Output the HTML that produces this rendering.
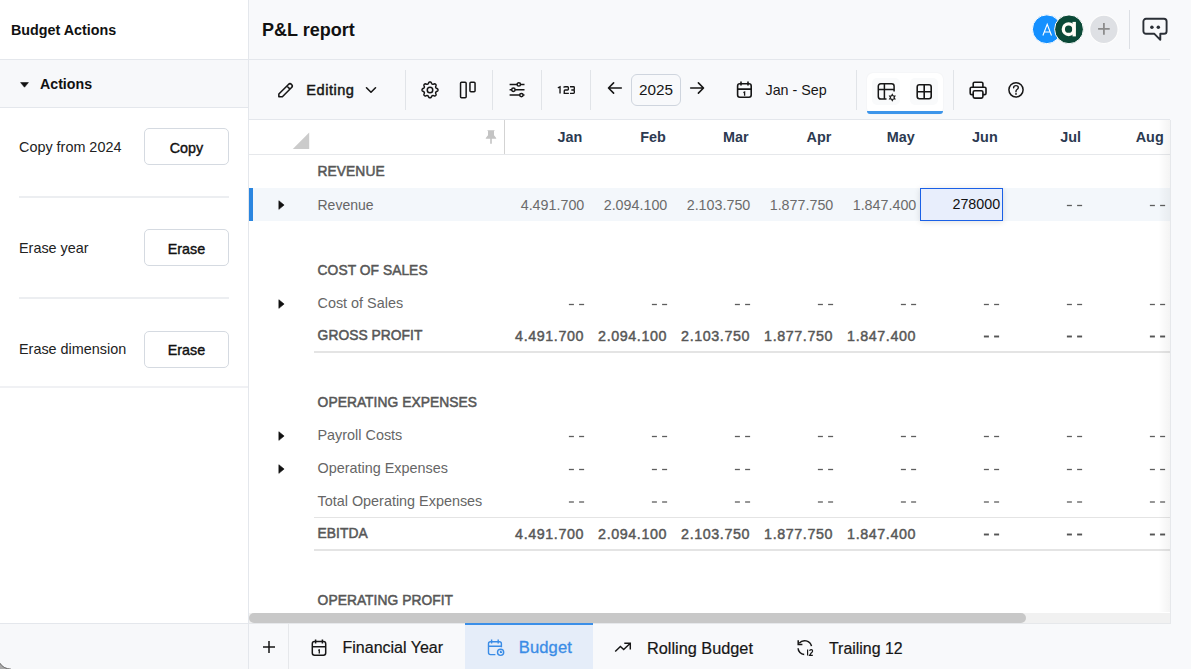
<!DOCTYPE html>
<html><head><meta charset="utf-8">
<style>
*{box-sizing:border-box;margin:0;padding:0}
html,body{width:1191px;height:670px;overflow:hidden;background:#f8f9fb;font-family:"Liberation Sans",sans-serif;color:#1c1c1e;position:relative}
.a{position:absolute}
.t{position:absolute;white-space:nowrap;line-height:1}
.hl{position:absolute;height:1px;background:#e4e7ec}
.vl{position:absolute;width:1px;background:#e4e7ec}
.btn{position:absolute;border:1px solid #d5dae1;border-radius:5px;background:#fff}
.sep{position:absolute;width:1px;background:#e1e4e8;top:70px;height:40px}
svg{position:absolute;overflow:visible}
</style></head><body>

<div class="a" style="left:0;top:0;width:248px;height:670px;background:#fff"></div>
<div class="t" style="left:11px;top:22.70px;font-size:14.3px;font-weight:700;color:#111">Budget Actions</div>
<div class="a" style="left:0;top:60px;width:248px;height:48px;background:#f7f8fa"></div>
<div class="hl" style="left:0;top:59px;width:248px"></div>
<div class="hl" style="left:0;top:107px;width:248px"></div>
<svg style="left:20px;top:82px" width="9" height="6"><path d="M0.6 0.6 L8.4 0.6 L4.5 5.2 Z" fill="#111" stroke="#111" stroke-width="0.6" stroke-linejoin="round"/></svg>
<div class="t" style="left:40px;top:76.68px;font-size:14.2px;font-weight:700;color:#111">Actions</div>
<div class="t" style="left:19px;top:140.01px;font-size:14.4px;color:#222">Copy from 2024</div>
<div class="btn" style="left:144px;top:128px;width:85px;height:37px"></div>
<div class="t" style="left:144px;width:85px;text-align:center;top:140.52px;font-size:14.3px;-webkit-text-stroke:0.4px #111;color:#111">Copy</div>
<div class="t" style="left:19px;top:241.01px;font-size:14.4px;color:#222">Erase year</div>
<div class="btn" style="left:144px;top:229px;width:85px;height:37px"></div>
<div class="t" style="left:144px;width:85px;text-align:center;top:241.52px;font-size:14.3px;-webkit-text-stroke:0.4px #111;color:#111">Erase</div>
<div class="t" style="left:19px;top:342.01px;font-size:14.4px;color:#222">Erase dimension</div>
<div class="btn" style="left:144px;top:331px;width:85px;height:37px"></div>
<div class="t" style="left:144px;width:85px;text-align:center;top:342.52px;font-size:14.3px;-webkit-text-stroke:0.4px #111;color:#111">Erase</div>
<div class="a" style="left:19px;top:196px;width:210px;height:2px;background:#eceef1"></div>
<div class="a" style="left:19px;top:297px;width:210px;height:2px;background:#eceef1"></div>
<div class="a" style="left:0;top:386px;width:248px;height:2px;background:#f0f1f4"></div>
<div class="a" style="left:0;top:624px;width:248px;height:46px;background:#f7f8fa"></div>
<div class="hl" style="left:0;top:623px;width:248px"></div>
<div class="vl" style="left:248px;top:0;height:670px"></div>
<div class="t" style="left:262px;top:20.96px;font-size:18px;font-weight:700;color:#111">P&amp;L report</div>
<div class="hl" style="left:249px;top:59px;width:921px"></div>
<div class="hl" style="left:249px;top:119px;width:921px"></div>
<svg style="left:1030px;top:13px" width="92" height="33"><circle cx="16.8" cy="16.25" r="14.4" fill="#1490ff" stroke="#fff" stroke-width="1"/><path d="M12.9 22.5L17.2 11.2L21.5 22.5M14.2 19.0H20.2" fill="none" stroke="#fff" stroke-width="1.1"/><circle cx="39" cy="16.3" r="14.4" fill="#0b4937" stroke="#fff" stroke-width="1"/><circle cx="38.6" cy="16.2" r="5.3" fill="none" stroke="#fffdf6" stroke-width="3.3"/><rect x="42.5" y="8.9" width="3.4" height="14.5" fill="#fffdf6"/><circle cx="73.9" cy="16.4" r="14.2" fill="#dee0e4" stroke="#fdfdfd" stroke-width="1.2"/><path d="M73.9 10.1V21.7M68.1 15.9H79.7" stroke="#8c8c8c" stroke-width="1.8"/></svg>
<div class="a" style="left:1129px;top:10px;width:1px;height:39px;background:#dcdfe4"></div>
<svg style="left:1142px;top:17px" width="26" height="25" viewBox="0 0 26 25"><path d="M4 1.8H22A2.6 2.6 0 0 1 24.6 4.4V14.2A2.6 2.6 0 0 1 22 16.8H18.3V22.8L12.4 16.8H4A2.6 2.6 0 0 1 1.4 14.2V4.4A2.6 2.6 0 0 1 4 1.8Z" fill="none" stroke="#2a2f36" stroke-width="1.9" stroke-linejoin="round"/><circle cx="9.9" cy="10.3" r="1.75" fill="#2a2f36"/><circle cx="16.3" cy="10.3" r="1.75" fill="#2a2f36"/></svg>
<svg style="left:272px;top:78px" width="30" height="24"><path d="M6.85 16.03 L16.44 6.44 A2.2 2.2 0 0 1 19.56 9.56 L10.37 18.75 L6.85 18.75 Z M14.88 8.0 L18.0 11.12" fill="none" stroke="#161616" stroke-width="1.55" stroke-linejoin="round"/></svg>
<div class="t" style="left:306.3px;top:82.54px;font-size:14.6px;color:#161616;letter-spacing:0.5px;-webkit-text-stroke:0.45px #161616">Editing</div>
<svg style="left:365px;top:86px" width="12" height="8"><path d="M1.5 1.8L6 6.2L10.5 1.8" fill="none" stroke="#161616" stroke-width="1.6" stroke-linecap="round" stroke-linejoin="round"/></svg>
<div class="sep" style="left:405px"></div>
<div class="sep" style="left:492px"></div>
<div class="sep" style="left:541px"></div>
<div class="sep" style="left:590px"></div>
<div class="sep" style="left:856px"></div>
<div class="sep" style="left:953px"></div>
<svg style="left:420px;top:80px" width="20" height="20"><path d="M10.00 1.95 L10.31 1.97 L10.62 2.05 L10.91 2.22 L11.17 2.52 L11.39 2.94 L11.57 3.36 L11.75 3.68 L11.96 3.88 L12.17 4.02 L12.39 4.13 L12.62 4.21 L12.87 4.26 L13.16 4.26 L13.51 4.17 L13.94 4.00 L14.39 3.85 L14.79 3.83 L15.11 3.91 L15.38 4.07 L15.62 4.28 L15.83 4.52 L15.99 4.79 L16.07 5.11 L16.05 5.51 L15.90 5.96 L15.73 6.39 L15.64 6.74 L15.64 7.03 L15.69 7.28 L15.77 7.51 L15.88 7.73 L16.02 7.94 L16.22 8.15 L16.54 8.33 L16.96 8.51 L17.38 8.73 L17.68 8.99 L17.85 9.28 L17.93 9.59 L17.95 9.90 L17.93 10.21 L17.85 10.52 L17.68 10.81 L17.38 11.07 L16.96 11.29 L16.54 11.47 L16.22 11.65 L16.02 11.86 L15.88 12.07 L15.77 12.29 L15.69 12.52 L15.64 12.77 L15.64 13.06 L15.73 13.41 L15.90 13.84 L16.05 14.29 L16.07 14.69 L15.99 15.01 L15.83 15.28 L15.62 15.52 L15.38 15.73 L15.11 15.89 L14.79 15.97 L14.39 15.95 L13.94 15.80 L13.51 15.63 L13.16 15.54 L12.87 15.54 L12.62 15.59 L12.39 15.67 L12.17 15.78 L11.96 15.92 L11.75 16.12 L11.57 16.44 L11.39 16.86 L11.17 17.28 L10.91 17.58 L10.62 17.75 L10.31 17.83 L10.00 17.85 L9.69 17.83 L9.38 17.75 L9.09 17.58 L8.83 17.28 L8.61 16.86 L8.43 16.44 L8.25 16.12 L8.04 15.92 L7.83 15.78 L7.61 15.67 L7.38 15.59 L7.13 15.54 L6.84 15.54 L6.49 15.63 L6.06 15.80 L5.61 15.95 L5.21 15.97 L4.89 15.89 L4.62 15.73 L4.38 15.52 L4.17 15.28 L4.01 15.01 L3.93 14.69 L3.95 14.29 L4.10 13.84 L4.27 13.41 L4.36 13.06 L4.36 12.77 L4.31 12.52 L4.23 12.29 L4.12 12.07 L3.98 11.86 L3.78 11.65 L3.46 11.47 L3.04 11.29 L2.62 11.07 L2.32 10.81 L2.15 10.52 L2.07 10.21 L2.05 9.90 L2.07 9.59 L2.15 9.28 L2.32 8.99 L2.62 8.73 L3.04 8.51 L3.46 8.33 L3.78 8.15 L3.98 7.94 L4.12 7.73 L4.23 7.51 L4.31 7.28 L4.36 7.03 L4.36 6.74 L4.27 6.39 L4.10 5.96 L3.95 5.51 L3.93 5.11 L4.01 4.79 L4.17 4.52 L4.38 4.28 L4.62 4.07 L4.89 3.91 L5.21 3.83 L5.61 3.85 L6.06 4.00 L6.49 4.17 L6.84 4.26 L7.13 4.26 L7.38 4.21 L7.61 4.13 L7.83 4.02 L8.04 3.88 L8.25 3.68 L8.43 3.36 L8.61 2.94 L8.83 2.52 L9.09 2.22 L9.38 2.05 L9.69 1.97 L10.00 1.95Z" fill="none" stroke="#161616" stroke-width="1.5" stroke-linejoin="round"/><circle cx="10" cy="9.9" r="2.75" fill="none" stroke="#161616" stroke-width="1.5"/></svg>
<svg style="left:458px;top:80px" width="20" height="20"><rect x="2.55" y="2.25" width="5.6" height="15.4" rx="1.0" fill="none" stroke="#161616" stroke-width="1.5"/><rect x="11.95" y="2.25" width="5.1" height="9.6" rx="1.0" fill="none" stroke="#161616" stroke-width="1.5"/></svg>
<svg style="left:508px;top:80px" width="20" height="20"><g stroke="#161616" stroke-width="1.5" fill="none"><path d="M1.6 4.4H9.1M12.5 4.4H16.5M1.6 9.8H3.7M7.1 9.8H16.5M1.6 15.1H11.7M15.1 15.1H16.5"/><circle cx="10.8" cy="4.4" r="1.7"/><circle cx="5.4" cy="9.8" r="1.7"/><circle cx="13.4" cy="15.1" r="1.7"/></g></svg>
<svg style="left:556px;top:84px" width="22" height="12"><g stroke="#161616" stroke-width="1.45" fill="none" stroke-linejoin="miter" transform="translate(0.45,0.55) scale(0.94,0.92)"><path d="M1.5 3.6L3.8 2.4V9.6"/><path d="M7.6 3.2Q8 2.4 9.4 2.4H11.8Q12.7 2.4 12.7 3.5V5.1Q12.7 5.9 11.8 5.9H9.1Q8.3 5.9 8.3 6.9V9.6H13.2"/><path d="M14.4 2.4H18.2Q19 2.4 19 3.3V5.1Q19 5.9 18.2 5.9H15.8M18.2 5.9Q19 5.9 19 6.8V8.7Q19 9.6 18.2 9.6H14.4"/></g></svg>
<svg style="left:606px;top:80px" width="18" height="16"><path d="M15.3 8H2.6M7.6 2.9L2.5 8L7.6 13.1" fill="none" stroke="#161616" stroke-width="1.6" stroke-linecap="round" stroke-linejoin="round"/></svg>
<svg style="left:688px;top:80px" width="18" height="16"><path d="M2.7 8H15.4M10.4 2.9L15.5 8L10.4 13.1" fill="none" stroke="#161616" stroke-width="1.6" stroke-linecap="round" stroke-linejoin="round"/></svg>
<div class="a" style="left:631px;top:74px;width:50px;height:32px;border:1px solid #cfd5de;border-radius:6px;background:#f8f9fb"></div>
<div class="t" style="left:631px;top:82.05px;font-size:15.3px;color:#161616;width:50px;text-align:center">2025</div>
<svg style="left:735px;top:80px" width="20" height="20"><g fill="none" stroke="#161616" stroke-width="1.6"><rect x="2.6" y="3.7" width="13.6" height="13.6" rx="2.2"/><path d="M2.6 9.1H16.2M6 1.4V5.6M13 1.4V5.6"/></g><path d="M8.4 12.6L9.6 12.0V15.8" fill="none" stroke="#161616" stroke-width="1.3"/></svg>
<div class="t" style="left:765.5px;top:82.90px;font-size:14.3px;color:#161616">Jan - Sep</div>
<div class="a" style="left:867px;top:73px;width:76px;height:41px;background:#fff;border-radius:6px;box-shadow:0 0 2px rgba(0,0,0,0.06)"></div>
<div class="a" style="left:867px;top:110.5px;width:76px;height:3px;background:#3d95ea;border-radius:0 0 3px 3px"></div>
<div class="a" style="left:872px;top:78px;width:28px;height:27px;background:#f9fafb;border-radius:5px"></div>
<div class="a" style="left:910px;top:78px;width:28px;height:27px;background:#f9fafb;border-radius:5px"></div>
<svg style="left:876px;top:82px" width="22" height="22"><g fill="none" stroke="#161616" stroke-width="1.5"><path d="M10.5 17.0H4.8Q2.3 17.0 2.3 14.5V4.3Q2.3 1.8 4.8 1.8H15.6Q18.1 1.8 18.1 4.3V9.6"/><path d="M2.3 7.5H18.1M8.4 1.8V17.0"/></g><path d="M16.30 12.50 L17.18 13.98 L18.90 14.00 L18.05 15.50 L18.90 17.00 L17.18 17.02 L16.30 18.50 L15.43 17.02 L13.70 17.00 L14.55 15.50 L13.70 14.00 L15.43 13.98Z" fill="#fff" stroke="#161616" stroke-width="1.2" stroke-linejoin="miter"/></svg>
<svg style="left:915px;top:82px" width="18" height="18"><g fill="none" stroke="#161616" stroke-width="1.6"><rect x="2.2" y="2.7" width="14" height="14" rx="2.2"/><path d="M2.2 9.7H16.2M9.2 2.7V16.7"/></g></svg>
<svg style="left:968px;top:80px" width="20" height="20"><g fill="none" stroke="#161616" stroke-width="1.6" stroke-linejoin="round"><path d="M5.2 14.6H3.6Q2.2 14.6 2.2 13.2V8.6Q2.2 7.2 3.6 7.2H16.6Q18 7.2 18 8.6V13.2Q18 14.6 16.6 14.6H14.9"/><path d="M5.2 7.2V3.6Q5.2 2.2 6.6 2.2H13.5Q14.9 2.2 14.9 3.6V7.2"/><rect x="5.2" y="10.8" width="9.7" height="7.3" rx="1.5"/></g></svg>
<svg style="left:1006px;top:80px" width="20" height="20"><circle cx="10" cy="9.85" r="7.1" fill="none" stroke="#161616" stroke-width="1.5"/><path d="M7.6 7.7Q7.7 5.6 10 5.6Q12.3 5.6 12.3 7.6Q12.3 8.8 11 9.5Q10 10.1 10 11.3V11.7" fill="none" stroke="#161616" stroke-width="1.4" stroke-linecap="round"/><circle cx="10" cy="13.9" r="0.9" fill="#161616"/></svg>
<div class="a" style="left:249px;top:120px;width:921px;height:493px;background:#fff"></div>
<div class="a" style="left:1170px;top:60px;width:21px;height:563px;background:#f8f9fb"></div>
<div class="hl" style="left:249px;top:154px;width:921px;background:#e6e8eb"></div>
<div class="a" style="left:504px;top:120px;width:1px;height:34px;background:#d3d3d3"></div>
<svg style="left:292px;top:132px" width="18" height="18"><path d="M17.2 0.6V17H0.8Z" fill="#cbcbcb"/></svg>
<svg style="left:484px;top:129px" width="14" height="16"><path d="M3.2 1.2H10.8L10 2.2V6.2L12.2 8.9V9.7H1.8V8.9L4 6.2V2.2Z M6.2 9.7H7.8V14.8H6.2Z" fill="#c4c4c4"/></svg>
<div class="t" style="left:382.29999999999995px;width:200px;text-align:right;top:129.71px;font-size:14.4px;font-weight:700;color:#2c3a51">Jan</div>
<div class="t" style="left:465.9px;width:200px;text-align:right;top:129.71px;font-size:14.4px;font-weight:700;color:#2c3a51">Feb</div>
<div class="t" style="left:548.5px;width:200px;text-align:right;top:129.71px;font-size:14.4px;font-weight:700;color:#2c3a51">Mar</div>
<div class="t" style="left:631.4px;width:200px;text-align:right;top:129.71px;font-size:14.4px;font-weight:700;color:#2c3a51">Apr</div>
<div class="t" style="left:714.7px;width:200px;text-align:right;top:129.71px;font-size:14.4px;font-weight:700;color:#2c3a51">May</div>
<div class="t" style="left:797.7px;width:200px;text-align:right;top:129.71px;font-size:14.4px;font-weight:700;color:#2c3a51">Jun</div>
<div class="t" style="left:881px;width:200px;text-align:right;top:129.71px;font-size:14.4px;font-weight:700;color:#2c3a51">Jul</div>
<div class="t" style="left:963.7px;width:200px;text-align:right;top:129.71px;font-size:14.4px;font-weight:700;color:#2c3a51">Aug</div>
<div class="a" style="left:249px;top:188px;width:921px;height:33px;background:#f3f7fb"></div>
<div class="a" style="left:249px;top:188px;width:4px;height:33px;background:#2a86e0"></div>
<div class="t" style="left:317.6px;top:165.22px;font-size:13.8px;color:#575757;letter-spacing:0.05px;-webkit-text-stroke:0.5px #575757">REVENUE</div>
<svg style="left:277px;top:199.5px" width="9" height="11"><path d="M1.85 0.75L7.1 5.05L1.85 9.35Z" fill="#111" stroke="#111" stroke-width="0.6" stroke-linejoin="round"/></svg>
<div class="t" style="left:317.5px;top:197.95px;font-size:14.0px;color:#666666">Revenue</div>
<div class="t" style="left:384.29999999999995px;width:200px;text-align:right;top:197.70px;font-size:14.3px;color:#6b6b6b">4.491.700</div>
<div class="t" style="left:467.29999999999995px;width:200px;text-align:right;top:197.70px;font-size:14.3px;color:#6b6b6b">2.094.100</div>
<div class="t" style="left:550.3px;width:200px;text-align:right;top:197.70px;font-size:14.3px;color:#6b6b6b">2.103.750</div>
<div class="t" style="left:633.3px;width:200px;text-align:right;top:197.70px;font-size:14.3px;color:#6b6b6b">1.877.750</div>
<div class="t" style="left:716.3px;width:200px;text-align:right;top:197.70px;font-size:14.3px;color:#6b6b6b">1.847.400</div>
<div class="a" style="left:920px;top:188px;width:83px;height:33px;background:#e8eefc;border:1px solid #1a60e6;box-shadow:0 1px 6px rgba(0,0,0,0.13)"></div>
<div class="t" style="left:800.2px;width:200px;text-align:right;top:196.90px;font-size:14.3px;color:#111">278000</div>
<svg style="left:1066px;top:202px" width="18" height="6"><rect x="0.90" y="2.85" width="5" height="1.3" fill="#5e5e5e"/><rect x="11.10" y="2.85" width="5" height="1.3" fill="#5e5e5e"/></svg>
<svg style="left:1149px;top:202px" width="18" height="6"><rect x="0.90" y="2.85" width="5" height="1.3" fill="#5e5e5e"/><rect x="11.10" y="2.85" width="5" height="1.3" fill="#5e5e5e"/></svg>
<div class="t" style="left:317.6px;top:263.72px;font-size:13.8px;color:#575757;letter-spacing:0.05px;-webkit-text-stroke:0.5px #575757">COST OF SALES</div>
<svg style="left:277px;top:298.5px" width="9" height="11"><path d="M1.85 0.75L7.1 5.05L1.85 9.35Z" fill="#111" stroke="#111" stroke-width="0.6" stroke-linejoin="round"/></svg>
<div class="t" style="left:317.5px;top:296.41px;font-size:14.4px;color:#666666">Cost of Sales</div>
<svg style="left:568px;top:301px" width="18" height="6"><rect x="0.90" y="2.85" width="5" height="1.3" fill="#5e5e5e"/><rect x="11.10" y="2.85" width="5" height="1.3" fill="#5e5e5e"/></svg>
<svg style="left:651px;top:301px" width="18" height="6"><rect x="0.90" y="2.85" width="5" height="1.3" fill="#5e5e5e"/><rect x="11.10" y="2.85" width="5" height="1.3" fill="#5e5e5e"/></svg>
<svg style="left:734px;top:301px" width="18" height="6"><rect x="0.90" y="2.85" width="5" height="1.3" fill="#5e5e5e"/><rect x="11.10" y="2.85" width="5" height="1.3" fill="#5e5e5e"/></svg>
<svg style="left:817px;top:301px" width="18" height="6"><rect x="0.90" y="2.85" width="5" height="1.3" fill="#5e5e5e"/><rect x="11.10" y="2.85" width="5" height="1.3" fill="#5e5e5e"/></svg>
<svg style="left:900px;top:301px" width="18" height="6"><rect x="0.90" y="2.85" width="5" height="1.3" fill="#5e5e5e"/><rect x="11.10" y="2.85" width="5" height="1.3" fill="#5e5e5e"/></svg>
<svg style="left:983px;top:301px" width="18" height="6"><rect x="0.90" y="2.85" width="5" height="1.3" fill="#5e5e5e"/><rect x="11.10" y="2.85" width="5" height="1.3" fill="#5e5e5e"/></svg>
<svg style="left:1066px;top:301px" width="18" height="6"><rect x="0.90" y="2.85" width="5" height="1.3" fill="#5e5e5e"/><rect x="11.10" y="2.85" width="5" height="1.3" fill="#5e5e5e"/></svg>
<svg style="left:1149px;top:301px" width="18" height="6"><rect x="0.90" y="2.85" width="5" height="1.3" fill="#5e5e5e"/><rect x="11.10" y="2.85" width="5" height="1.3" fill="#5e5e5e"/></svg>
<div class="t" style="left:317.6px;top:328.92px;font-size:13.8px;color:#575757;letter-spacing:0.05px;-webkit-text-stroke:0.5px #575757">GROSS PROFIT</div>
<div class="t" style="left:384.0999999999999px;width:200px;text-align:right;top:328.50px;font-size:14.3px;color:#575757;letter-spacing:0.6px;margin-right:-0.6px;-webkit-text-stroke:0.45px #575757">4.491.700</div>
<div class="t" style="left:467.0999999999999px;width:200px;text-align:right;top:328.50px;font-size:14.3px;color:#575757;letter-spacing:0.6px;margin-right:-0.6px;-webkit-text-stroke:0.45px #575757">2.094.100</div>
<div class="t" style="left:550.0999999999999px;width:200px;text-align:right;top:328.50px;font-size:14.3px;color:#575757;letter-spacing:0.6px;margin-right:-0.6px;-webkit-text-stroke:0.45px #575757">2.103.750</div>
<div class="t" style="left:633.0999999999999px;width:200px;text-align:right;top:328.50px;font-size:14.3px;color:#575757;letter-spacing:0.6px;margin-right:-0.6px;-webkit-text-stroke:0.45px #575757">1.877.750</div>
<div class="t" style="left:716.0999999999999px;width:200px;text-align:right;top:328.50px;font-size:14.3px;color:#575757;letter-spacing:0.6px;margin-right:-0.6px;-webkit-text-stroke:0.45px #575757">1.847.400</div>
<svg style="left:983px;top:333px" width="18" height="6"><rect x="0.90" y="2.55" width="5" height="1.9" fill="#555"/><rect x="11.10" y="2.55" width="5" height="1.9" fill="#555"/></svg>
<svg style="left:1066px;top:333px" width="18" height="6"><rect x="0.90" y="2.55" width="5" height="1.9" fill="#555"/><rect x="11.10" y="2.55" width="5" height="1.9" fill="#555"/></svg>
<svg style="left:1149px;top:333px" width="18" height="6"><rect x="0.90" y="2.55" width="5" height="1.9" fill="#555"/><rect x="11.10" y="2.55" width="5" height="1.9" fill="#555"/></svg>
<div class="a" style="left:314px;top:351px;width:856px;height:2px;background:#e4e4e4"></div>
<div class="t" style="left:317.6px;top:395.82px;font-size:13.8px;color:#575757;letter-spacing:0.05px;-webkit-text-stroke:0.5px #575757">OPERATING EXPENSES</div>
<svg style="left:277px;top:430.5px" width="9" height="11"><path d="M1.85 0.75L7.1 5.05L1.85 9.35Z" fill="#111" stroke="#111" stroke-width="0.6" stroke-linejoin="round"/></svg>
<div class="t" style="left:317.5px;top:428.31px;font-size:14.4px;color:#666666">Payroll Costs</div>
<svg style="left:568px;top:433px" width="18" height="6"><rect x="0.90" y="2.85" width="5" height="1.3" fill="#5e5e5e"/><rect x="11.10" y="2.85" width="5" height="1.3" fill="#5e5e5e"/></svg>
<svg style="left:651px;top:433px" width="18" height="6"><rect x="0.90" y="2.85" width="5" height="1.3" fill="#5e5e5e"/><rect x="11.10" y="2.85" width="5" height="1.3" fill="#5e5e5e"/></svg>
<svg style="left:734px;top:433px" width="18" height="6"><rect x="0.90" y="2.85" width="5" height="1.3" fill="#5e5e5e"/><rect x="11.10" y="2.85" width="5" height="1.3" fill="#5e5e5e"/></svg>
<svg style="left:817px;top:433px" width="18" height="6"><rect x="0.90" y="2.85" width="5" height="1.3" fill="#5e5e5e"/><rect x="11.10" y="2.85" width="5" height="1.3" fill="#5e5e5e"/></svg>
<svg style="left:900px;top:433px" width="18" height="6"><rect x="0.90" y="2.85" width="5" height="1.3" fill="#5e5e5e"/><rect x="11.10" y="2.85" width="5" height="1.3" fill="#5e5e5e"/></svg>
<svg style="left:983px;top:433px" width="18" height="6"><rect x="0.90" y="2.85" width="5" height="1.3" fill="#5e5e5e"/><rect x="11.10" y="2.85" width="5" height="1.3" fill="#5e5e5e"/></svg>
<svg style="left:1066px;top:433px" width="18" height="6"><rect x="0.90" y="2.85" width="5" height="1.3" fill="#5e5e5e"/><rect x="11.10" y="2.85" width="5" height="1.3" fill="#5e5e5e"/></svg>
<svg style="left:1149px;top:433px" width="18" height="6"><rect x="0.90" y="2.85" width="5" height="1.3" fill="#5e5e5e"/><rect x="11.10" y="2.85" width="5" height="1.3" fill="#5e5e5e"/></svg>
<svg style="left:277px;top:463.5px" width="9" height="11"><path d="M1.85 0.75L7.1 5.05L1.85 9.35Z" fill="#111" stroke="#111" stroke-width="0.6" stroke-linejoin="round"/></svg>
<div class="t" style="left:317.5px;top:461.21px;font-size:14.4px;color:#666666">Operating Expenses</div>
<svg style="left:568px;top:466px" width="18" height="6"><rect x="0.90" y="2.85" width="5" height="1.3" fill="#5e5e5e"/><rect x="11.10" y="2.85" width="5" height="1.3" fill="#5e5e5e"/></svg>
<svg style="left:651px;top:466px" width="18" height="6"><rect x="0.90" y="2.85" width="5" height="1.3" fill="#5e5e5e"/><rect x="11.10" y="2.85" width="5" height="1.3" fill="#5e5e5e"/></svg>
<svg style="left:734px;top:466px" width="18" height="6"><rect x="0.90" y="2.85" width="5" height="1.3" fill="#5e5e5e"/><rect x="11.10" y="2.85" width="5" height="1.3" fill="#5e5e5e"/></svg>
<svg style="left:817px;top:466px" width="18" height="6"><rect x="0.90" y="2.85" width="5" height="1.3" fill="#5e5e5e"/><rect x="11.10" y="2.85" width="5" height="1.3" fill="#5e5e5e"/></svg>
<svg style="left:900px;top:466px" width="18" height="6"><rect x="0.90" y="2.85" width="5" height="1.3" fill="#5e5e5e"/><rect x="11.10" y="2.85" width="5" height="1.3" fill="#5e5e5e"/></svg>
<svg style="left:983px;top:466px" width="18" height="6"><rect x="0.90" y="2.85" width="5" height="1.3" fill="#5e5e5e"/><rect x="11.10" y="2.85" width="5" height="1.3" fill="#5e5e5e"/></svg>
<svg style="left:1066px;top:466px" width="18" height="6"><rect x="0.90" y="2.85" width="5" height="1.3" fill="#5e5e5e"/><rect x="11.10" y="2.85" width="5" height="1.3" fill="#5e5e5e"/></svg>
<svg style="left:1149px;top:466px" width="18" height="6"><rect x="0.90" y="2.85" width="5" height="1.3" fill="#5e5e5e"/><rect x="11.10" y="2.85" width="5" height="1.3" fill="#5e5e5e"/></svg>
<div class="t" style="left:317.5px;top:493.71px;font-size:14.4px;color:#666666">Total Operating Expenses</div>
<svg style="left:568px;top:499px" width="18" height="6"><rect x="0.90" y="2.35" width="5" height="1.3" fill="#5e5e5e"/><rect x="11.10" y="2.35" width="5" height="1.3" fill="#5e5e5e"/></svg>
<svg style="left:651px;top:499px" width="18" height="6"><rect x="0.90" y="2.35" width="5" height="1.3" fill="#5e5e5e"/><rect x="11.10" y="2.35" width="5" height="1.3" fill="#5e5e5e"/></svg>
<svg style="left:734px;top:499px" width="18" height="6"><rect x="0.90" y="2.35" width="5" height="1.3" fill="#5e5e5e"/><rect x="11.10" y="2.35" width="5" height="1.3" fill="#5e5e5e"/></svg>
<svg style="left:817px;top:499px" width="18" height="6"><rect x="0.90" y="2.35" width="5" height="1.3" fill="#5e5e5e"/><rect x="11.10" y="2.35" width="5" height="1.3" fill="#5e5e5e"/></svg>
<svg style="left:900px;top:499px" width="18" height="6"><rect x="0.90" y="2.35" width="5" height="1.3" fill="#5e5e5e"/><rect x="11.10" y="2.35" width="5" height="1.3" fill="#5e5e5e"/></svg>
<svg style="left:983px;top:499px" width="18" height="6"><rect x="0.90" y="2.35" width="5" height="1.3" fill="#5e5e5e"/><rect x="11.10" y="2.35" width="5" height="1.3" fill="#5e5e5e"/></svg>
<svg style="left:1066px;top:499px" width="18" height="6"><rect x="0.90" y="2.35" width="5" height="1.3" fill="#5e5e5e"/><rect x="11.10" y="2.35" width="5" height="1.3" fill="#5e5e5e"/></svg>
<svg style="left:1149px;top:499px" width="18" height="6"><rect x="0.90" y="2.35" width="5" height="1.3" fill="#5e5e5e"/><rect x="11.10" y="2.35" width="5" height="1.3" fill="#5e5e5e"/></svg>
<div class="a" style="left:314px;top:517px;width:856px;height:1px;background:#e4e4e4"></div>
<div class="t" style="left:317.6px;top:527.22px;font-size:13.8px;color:#575757;letter-spacing:0.05px;-webkit-text-stroke:0.5px #575757">EBITDA</div>
<div class="t" style="left:384.0999999999999px;width:200px;text-align:right;top:526.80px;font-size:14.3px;color:#575757;letter-spacing:0.6px;margin-right:-0.6px;-webkit-text-stroke:0.45px #575757">4.491.700</div>
<div class="t" style="left:467.0999999999999px;width:200px;text-align:right;top:526.80px;font-size:14.3px;color:#575757;letter-spacing:0.6px;margin-right:-0.6px;-webkit-text-stroke:0.45px #575757">2.094.100</div>
<div class="t" style="left:550.0999999999999px;width:200px;text-align:right;top:526.80px;font-size:14.3px;color:#575757;letter-spacing:0.6px;margin-right:-0.6px;-webkit-text-stroke:0.45px #575757">2.103.750</div>
<div class="t" style="left:633.0999999999999px;width:200px;text-align:right;top:526.80px;font-size:14.3px;color:#575757;letter-spacing:0.6px;margin-right:-0.6px;-webkit-text-stroke:0.45px #575757">1.877.750</div>
<div class="t" style="left:716.0999999999999px;width:200px;text-align:right;top:526.80px;font-size:14.3px;color:#575757;letter-spacing:0.6px;margin-right:-0.6px;-webkit-text-stroke:0.45px #575757">1.847.400</div>
<svg style="left:983px;top:531px" width="18" height="6"><rect x="0.90" y="2.55" width="5" height="1.9" fill="#555"/><rect x="11.10" y="2.55" width="5" height="1.9" fill="#555"/></svg>
<svg style="left:1066px;top:531px" width="18" height="6"><rect x="0.90" y="2.55" width="5" height="1.9" fill="#555"/><rect x="11.10" y="2.55" width="5" height="1.9" fill="#555"/></svg>
<svg style="left:1149px;top:531px" width="18" height="6"><rect x="0.90" y="2.55" width="5" height="1.9" fill="#555"/><rect x="11.10" y="2.55" width="5" height="1.9" fill="#555"/></svg>
<div class="a" style="left:314px;top:549px;width:856px;height:2px;background:#e4e4e4"></div>
<div class="t" style="left:317.6px;top:594.22px;font-size:13.8px;color:#575757;letter-spacing:0.05px;-webkit-text-stroke:0.5px #575757">OPERATING PROFIT</div>
<div class="a" style="left:1158px;top:120px;width:12px;height:492px;background:linear-gradient(to right,rgba(0,0,0,0),rgba(0,0,0,0.045))"></div>
<div class="a" style="left:1170px;top:120px;width:1px;height:503px;background:#e6e8eb"></div>
<div class="a" style="left:249px;top:613px;width:921px;height:10px;background:#f1f1f1"></div>
<div class="a" style="left:249px;top:613px;width:777px;height:10px;background:#c8c8c8;border-radius:5px"></div>
<div class="a" style="left:249px;top:624px;width:942px;height:46px;background:#f8f9fb"></div>
<div class="hl" style="left:249px;top:623px;width:922px;background:#e6e8eb"></div>
<div class="a" style="left:288px;top:624px;width:1px;height:46px;background:#e6e8eb"></div>
<svg style="left:262px;top:640px" width="14" height="14"><path d="M7 1V13M1 7H13" stroke="#161616" stroke-width="1.5"/></svg>
<svg style="left:310px;top:638px" width="18" height="19"><g fill="none" stroke="#161616" stroke-width="1.5"><rect x="2.3" y="3.6" width="13.4" height="13.6" rx="2.2"/><path d="M2.3 8.8H15.7M5.6 1.5V5.4M12.4 1.5V5.4"/></g><path d="M8.2 12.4L9.3 11.9V15.4" fill="none" stroke="#161616" stroke-width="1.3"/></svg>
<div class="t" style="left:342.5px;top:640.46px;font-size:16.0px;color:#161616;-webkit-text-stroke:0.2px #161616">Financial Year</div>
<div class="a" style="left:465px;top:624px;width:128px;height:46px;background:#e5edf9"></div>
<div class="a" style="left:465px;top:623px;width:128px;height:2px;background:#3b8fe8"></div>
<svg style="left:486px;top:637px" width="20" height="20"><g fill="none" stroke="#3a8ce6" stroke-width="1.4"><path d="M9.4 17.6H4.5Q2.5 17.6 2.5 15.6V6.8Q2.5 4.8 4.5 4.8H13.4Q15.4 4.8 15.4 6.8V10.2"/><path d="M2.5 9.3H15.4M5.6 2.6V6.4M12.2 2.6V6.4"/><circle cx="14.6" cy="15.3" r="3.1"/><path d="M14.6 13.7V15.3H16.1"/></g></svg>
<div class="t" style="left:518.8px;top:639.95px;font-size:16.6px;color:#3a8ce6;letter-spacing:0.1px;-webkit-text-stroke:0.3px #3a8ce6">Budget</div>
<svg style="left:612px;top:640px" width="22" height="16"><path d="M3.2 11.5L8.4 6.4L11.7 9.6L18.3 3.3M12.3 3.3H18.3V9.6" fill="none" stroke="#161616" stroke-width="1.45" stroke-linejoin="miter"/></svg>
<div class="t" style="left:647px;top:640.20px;font-size:16.3px;color:#161616;-webkit-text-stroke:0.2px #161616">Rolling Budget</div>
<svg style="left:795px;top:638px" width="22" height="20"><g fill="none" stroke="#161616" stroke-width="1.5"><path d="M16.5 8.2A7 7 0 0 0 4.2 5.3"/><path d="M3.2 2.3V6.6H7.4"/><path d="M3.1 10.2A6.4 6.4 0 0 0 9.2 16.4"/></g><path d="M12.6 11.6V17.4M14.6 12.9Q14.8 11.6 16.2 11.6Q17.6 11.6 17.6 12.9Q17.6 14 16.2 15L14.6 17.3H17.8" fill="none" stroke="#161616" stroke-width="1.2"/></svg>
<div class="t" style="left:829px;top:640.54px;font-size:15.9px;color:#161616;-webkit-text-stroke:0.2px #161616">Trailing 12</div>
<svg style="left:0;top:660px" width="14" height="10"><path d="M0 3.2 Q3 8.6 11 9.2 L0 9.2Z" fill="#aaa"/><path d="M0 3.2 Q3 8.6 11 9.2" fill="none" stroke="#555" stroke-width="0.9"/></svg>
<div class="a" style="left:0;top:669px;width:1191px;height:1px;background:#fff"></div>
</body></html>
